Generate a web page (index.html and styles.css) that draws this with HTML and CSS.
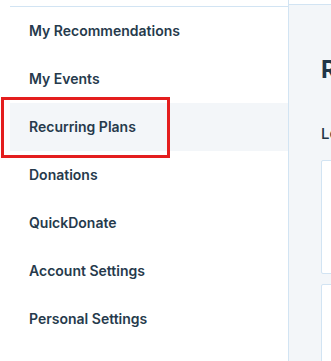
FILE: index.html
```html
<!DOCTYPE html>
<html lang="en">
<head>
<meta charset="utf-8">
<title>Recurring Plans</title>
<link rel="stylesheet" href="styles.css">
</head>
<body>
<div class="layout">
  <aside class="sidebar">
    <div class="top-gap"></div>
    <nav class="nav">
      <a class="nav-item">My Recommendations</a>
      <a class="nav-item">My Events</a>
      <a class="nav-item active">Recurring Plans</a>
      <a class="nav-item">Donations</a>
      <a class="nav-item">QuickDonate</a>
      <a class="nav-item">Account Settings</a>
      <a class="nav-item">Personal Settings</a>
    </nav>
  </aside>
  <main class="main">
    <div class="top-gap"></div>
    <div class="content">
      <h1 class="title">Recurring Plans</h1>
      <p class="subtitle">Learn about your recurring plans</p>
      <div class="card"></div>
      <div class="card card-tall"></div>
    </div>
  </main>
</div>
<div class="highlight-box"></div>
</body>
</html>
```

FILE: styles.css
```css
html, body {
  margin: 0;
  padding: 0;
  overflow: hidden;
  background: #ffffff;
  font-family: "Inter", "Noto Sans", sans-serif;
}

.layout {
  display: flex;
  width: 331px;
  height: 361px;
  overflow: hidden;
}

.top-gap {
  height: 6px;
  background: #ffffff;
}

.sidebar {
  flex: 0 0 288px;
  border-right: 1px solid #d2e4f3;
  display: flex;
  flex-direction: column;
}

.nav {
  margin-left: 10px;
  border-top: 1px solid #d2e4f3;
  display: flex;
  flex-direction: column;
}

.nav-item {
  display: block;
  height: 48px;
  line-height: 48px;
  padding-left: 19px;
  font-size: 14px;
  font-weight: 600;
  color: #263a4c;
  white-space: nowrap;
}

.nav-item.active {
  background: #f3f6f9;
}

.main {
  flex: 1 1 auto;
  min-width: 0;
  display: flex;
  flex-direction: column;
  overflow: hidden;
}

.content {
  flex: 1 1 auto;
  border-top: 1px solid #d2e4f3;
  background: #f3f6f9;
  padding: 49px 0 0 32px;
  overflow: hidden;
}

.title {
  margin: 0;
  font-size: 24px;
  line-height: 32px;
  font-weight: 700;
  color: #1f3547;
  white-space: nowrap;
}

.subtitle {
  margin: 38px 0 16px;
  font-size: 15px;
  line-height: 20px;
  font-weight: 500;
  color: #1f3547;
  white-space: nowrap;
}

.card {
  width: 300px;
  height: 114px;
  box-sizing: border-box;
  background: #ffffff;
  border: 1px solid #d2e4f3;
  border-radius: 2px;
  margin-bottom: 10px;
}

.card-tall {
  height: 200px;
}

.highlight-box {
  position: absolute;
  left: 1px;
  top: 97px;
  width: 169px;
  height: 61px;
  box-sizing: border-box;
  border: 3px solid #e41e1e;
}
```
